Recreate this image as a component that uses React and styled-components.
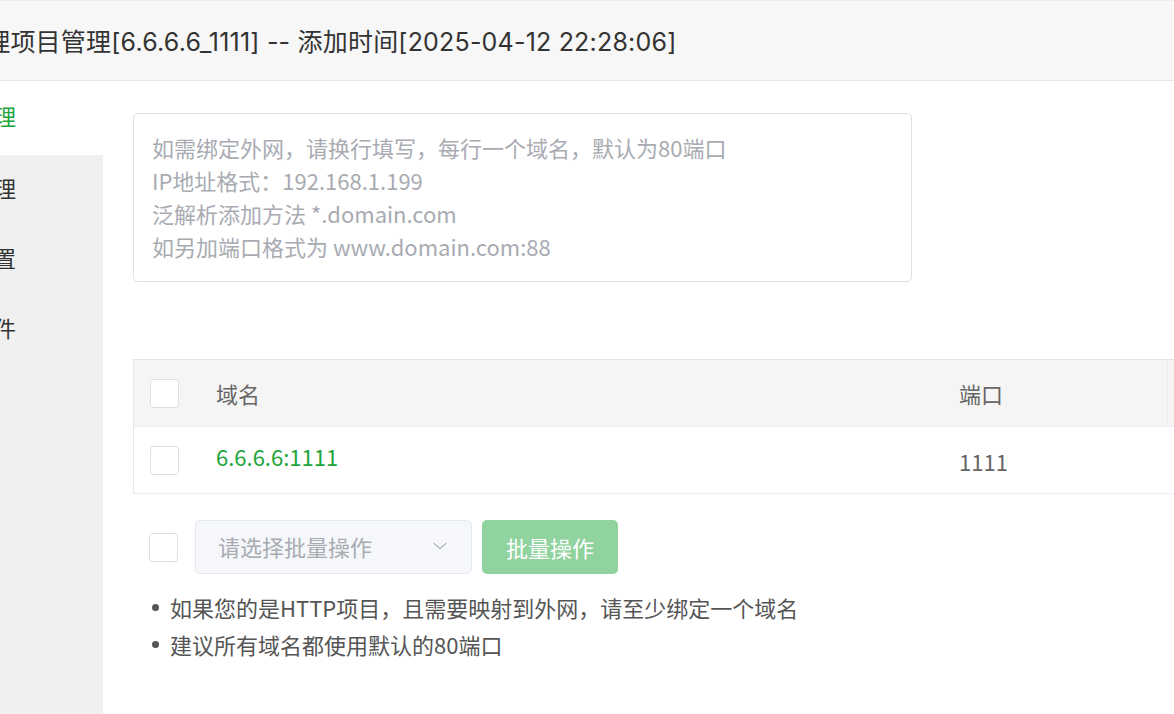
import React from "react"
import styled, { createGlobalStyle } from "styled-components"

const GlobalStyle = createGlobalStyle`
  html, body {
    margin: 0;
    padding: 0;
    background: #fff;
    overflow: hidden;
  }
  body {
    font-family: "Noto Sans CJK SC", "Noto Sans", sans-serif;
    color: #333;
  }
`

const menu = [
  { label: "域名管理", active: true },
  { label: "代理管理" },
  { label: "全局配置" },
  { label: "配置文件" },
]

const tips = [
  "如果您的是HTTP项目，且需要映射到外网，请至少绑定一个域名",
  "建议所有域名都使用默认的80端口",
]

const placeholder = [
  "如需绑定外网，请换行填写，每行一个域名，默认为80端口",
  "IP地址格式：192.168.1.199",
  "泛解析添加方法 *.domain.com",
  "如另加端口格式为 www.domain.com:88",
].join("\n")

const ChevronDown = () => (
  <svg width="18" height="18" viewBox="0 0 24 24" fill="none" stroke="#a8abb2" strokeWidth="1.6" strokeLinecap="round" strokeLinejoin="round">
    <path d="M4 8.5l8 7 8-7" />
  </svg>
)

const App = () => {
  return (
    <>
      <GlobalStyle />
      <Dialog>
        <Title>
          <TitleText>代理项目管理[6.6.6.6_1111] -- 添加时间[2025-04-12 22:28:06]</TitleText>
        </Title>
        <Body>
          <Sidebar>
            {menu.map(item => (
              <MenuItem key={item.label} $active={item.active}>
                {item.label}
              </MenuItem>
            ))}
          </Sidebar>
          <Content>
            <DomainInput placeholder={placeholder} />

            <Table>
              <HeadRow>
                <Cell $check>
                  <Checkbox />
                </Cell>
                <Cell>域名</Cell>
                <Cell $divider>端口</Cell>
                <Cell>操作</Cell>
              </HeadRow>
              <Row>
                <Cell $check>
                  <Checkbox />
                </Cell>
                <Cell>
                  <DomainLink>6.6.6.6:1111</DomainLink>
                </Cell>
                <Cell $shift>1111</Cell>
                <Cell />
              </Row>
            </Table>

            <Toolbar>
              <Checkbox />
              <Select>
                <span>请选择批量操作</span>
                <ChevronDown />
              </Select>
              <BatchButton disabled>批量操作</BatchButton>
            </Toolbar>

            <Tips>
              {tips.map(t => (
                <Tip key={t}>{t}</Tip>
              ))}
            </Tips>
          </Content>
        </Body>
      </Dialog>
    </>
  )
}

export default App

const Dialog = styled.div`
  margin-left: -84px;
  width: 1420px;
  height: 714px;
  display: flex;
  flex-direction: column;
`

const Title = styled.div`
  height: 81px;
  flex-shrink: 0;
  box-sizing: border-box;
  border-top: 1px solid #ededed;
  border-bottom: 1px solid #e8e8e8;
  background: #f7f7f7;
  display: flex;
  align-items: center;
`

const TitleText = styled.span`
  font-family: Inter, "Noto Sans CJK SC", sans-serif;
  font-size: 25px;
  letter-spacing: 0.2px;
  color: #333;
  margin-left: 44px;
  margin-top: -2px;
`

const Body = styled.div`
  flex: 1;
  display: flex;
`

const Sidebar = styled.div`
  width: 187px;
  flex-shrink: 0;
  background: #f0f0f0;
  display: flex;
  flex-direction: column;
`

const MenuItem = styled.div`
  height: ${p => (p.$active ? "74px" : "70px")};
  box-sizing: border-box;
  padding: 0 0 6px 12px;
  display: flex;
  align-items: center;
  font-size: 22px;
  color: ${p => (p.$active ? "#20a53a" : "#333")};
  background: ${p => (p.$active ? "#fff" : "transparent")};
`

const Content = styled.div`
  flex: 1;
  padding: 32px 0 0 30px;
  display: flex;
  flex-direction: column;
`

const DomainInput = styled.textarea`
  width: 779px;
  height: 169px;
  box-sizing: border-box;
  border: 1px solid #dcdfe6;
  border-radius: 5px;
  padding: 17px 18px 16px;
  font-family: inherit;
  font-size: 22px;
  line-height: 33px;
  resize: none;
  outline: none;
  color: #333;
  &::placeholder {
    color: #a8abb2;
  }
`

const Table = styled.div`
  margin-top: 77px;
  border-left: 1px solid #e4e7ed;
  border-top: 1px solid #e4e4e4;
`

const HeadRow = styled.div`
  display: grid;
  grid-template-columns: 67px 743px 224px 1fr;
  height: 67px;
  box-sizing: border-box;
  background: #f5f5f5;
  border-bottom: 1px solid #ebeef5;
  color: #666;
`

const Row = styled(HeadRow)`
  background: #fff;
  color: #666;
`

const Cell = styled.div`
  display: flex;
  align-items: center;
  padding-left: ${p => (p.$check ? "16px" : "15px")};
  font-size: 22px;
  border-right: ${p => (p.$divider ? "1px solid #ececec" : "none")};
  padding-top: ${p => (p.$shift ? "1px" : "0")};
`

const DomainLink = styled.span`
  color: #20a53a;
  margin-top: -8px;
`

const Checkbox = styled.span`
  display: inline-block;
  width: 29px;
  height: 29px;
  box-sizing: border-box;
  border: 1px solid #dcdfe6;
  border-radius: 3px;
  background: #fff;
  flex-shrink: 0;
`

const Toolbar = styled.div`
  margin-top: 26px;
  display: flex;
  align-items: center;
  gap: 10px;
  padding-left: 16px;
  & > ${Checkbox} {
    margin-right: 7px;
  }
`

const Select = styled.div`
  width: 277px;
  height: 54px;
  box-sizing: border-box;
  border: 1px solid #e4e7ed;
  border-radius: 5px;
  background: #f5f7fa;
  display: flex;
  align-items: center;
  justify-content: space-between;
  padding: 0 22px 2px 22px;
  font-size: 22px;
  color: #a8abb2;
`

const BatchButton = styled.button`
  width: 136px;
  height: 54px;
  border: none;
  border-radius: 5px;
  background: #90d39e;
  color: #fff;
  font-family: inherit;
  font-size: 22px;
  padding-bottom: 2px;
  cursor: not-allowed;
`

const Tips = styled.ul`
  margin: 15px 0 0;
  padding: 0 0 0 37px;
  list-style: none;
`

const Tip = styled.li`
  position: relative;
  font-size: 22px;
  line-height: 37px;
  color: #555;
  &::before {
    content: "";
    position: absolute;
    left: -18px;
    top: 15px;
    width: 7px;
    height: 7px;
    border-radius: 50%;
    background: #555;
  }
`
